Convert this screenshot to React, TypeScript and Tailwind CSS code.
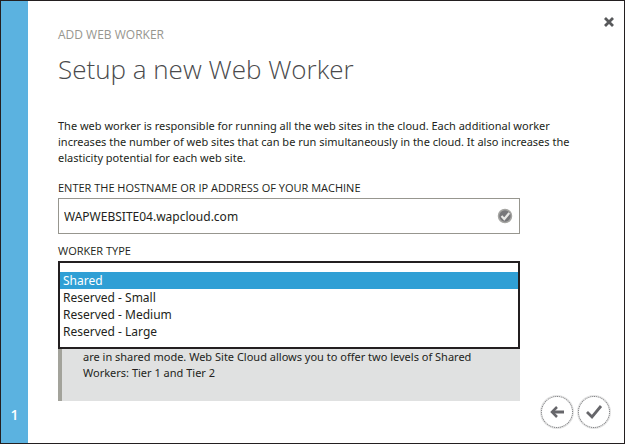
import { useState } from "react";

const workerTypes = ["Shared", "Reserved - Small", "Reserved - Medium", "Reserved - Large"];

const roundButton =
  "flex size-[34px] items-center justify-center rounded-full border-2 border-[#e4e4e4] bg-white outline-1 -outline-offset-2 outline-dotted outline-[#77787b] text-[#66666a]";

export default function App() {
  const [host, setHost] = useState("WAPWEBSITE04.wapcloud.com");
  const [type, setType] = useState("Shared");

  return (
    <div className="flex min-h-screen border border-[#231f20] bg-white font-['Open_Sans','Noto_Sans',sans-serif] text-xs text-[#231f20]">
      <aside className="flex w-[27px] shrink-0 items-end justify-center bg-[#5bb2e0] pb-5 text-sm leading-4 font-semibold text-white">
        1
      </aside>
      <div className="flex min-w-0 flex-1 flex-col">
        <header className="flex items-start justify-between pt-4 pr-2.5 pl-[30px]">
          <div className="pt-2.5">
            <p className="leading-4 text-[#97968f]">ADD WEB WORKER</p>
            <h1 className="mt-2 text-[26px] leading-9 font-light text-[#4a4a4c]">Setup a new Web Worker</h1>
          </div>
          <button type="button" aria-label="Close" className="text-[#58595b]">
            <svg viewBox="0 0 10 10" className="size-2.5" fill="none" stroke="currentColor" strokeWidth="2.8">
              <path d="M1 1l8 8M9 1l-8 8" />
            </svg>
          </button>
        </header>
        <p className="mt-[31px] ml-[30px] max-w-[530px] font-['Noto_Sans',sans-serif] text-[11px] leading-4">
          The web worker is responsible for running all the web sites in the cloud. Each additional worker increases
          the number of web sites that can be run simultaneously in the cloud. It also increases the elasticity
          potential for each web site.
        </p>
        <div className="flex flex-1 justify-between pr-[13px] pl-[30px]">
          <main className="max-w-[462px] min-w-0 flex-1 pt-3.5">
            <label htmlFor="host" className="block text-[11px] leading-4 font-medium">
              ENTER THE HOSTNAME OR IP ADDRESS OF YOUR MACHINE
            </label>
            <div className="mt-0.5 flex h-9 items-center border border-[#97968f] pr-1.5">
              <input
                id="host"
                value={host}
                onChange={(e) => setHost(e.target.value)}
                className="h-full min-w-0 flex-1 px-[5px] font-['Noto_Sans',sans-serif] outline-none"
              />
              <svg viewBox="0 0 16 16" className="size-4" fill="none">
                <circle cx="8" cy="8" r="6.500" fill="#77777a" stroke="#a5a5a2" strokeWidth="1.500" />
                <path d="M4.500 8l2.800 3 5-6" stroke="#e8e8e6" strokeWidth="2.200" />
              </svg>
            </div>
            <label htmlFor="type" className="mt-[9px] block text-[11px] leading-4 font-medium">
              WORKER TYPE
            </label>
            <select
              id="type"
              size={4}
              value={type}
              onChange={(e) => setType(e.target.value)}
              className="mt-0.5 block h-[88px] w-full overflow-hidden border-2 border-[#231f20] bg-white pt-[9px] font-['Noto_Sans',sans-serif] outline-none"
            >
              {workerTypes.map((t) => (
                <option
                  key={t}
                  value={t}
                  className="h-[17px] min-h-0 px-[3px] py-0 leading-[17px] checked:bg-[#2f9fd5] checked:bg-linear-to-r checked:from-[#2f9fd5] checked:to-[#2f9fd5] checked:text-white"
                >
                  {t}
                </option>
              ))}
            </select>
            <p className="h-[52px] border-l-4 border-[#a3a39b] bg-[#e0e1e1] pr-6 pl-[21px] font-['Noto_Sans',sans-serif] text-[11px] leading-4">
              are in shared mode. Web Site Cloud allows you to offer two levels of Shared Workers: Tier 1 and Tier 2
            </p>
          </main>
          <div className="flex items-end gap-[3px] pb-3.5">
            <button type="button" aria-label="Back" className={roundButton}>
              <svg viewBox="0 0 16 16" className="size-4" fill="none" stroke="currentColor">
                <path d="M8 3L3 8l5 5" strokeWidth="2.500" />
                <path d="M3 8h12" strokeWidth="3" />
              </svg>
            </button>
            <button type="button" aria-label="Finish" className={roundButton}>
              <svg viewBox="0 0 18 18" className="size-[18px]" fill="none" stroke="currentColor" strokeWidth="2.800">
                <path d="M2 9l5 5L16 3" />
              </svg>
            </button>
          </div>
        </div>
      </div>
    </div>
  );
}
